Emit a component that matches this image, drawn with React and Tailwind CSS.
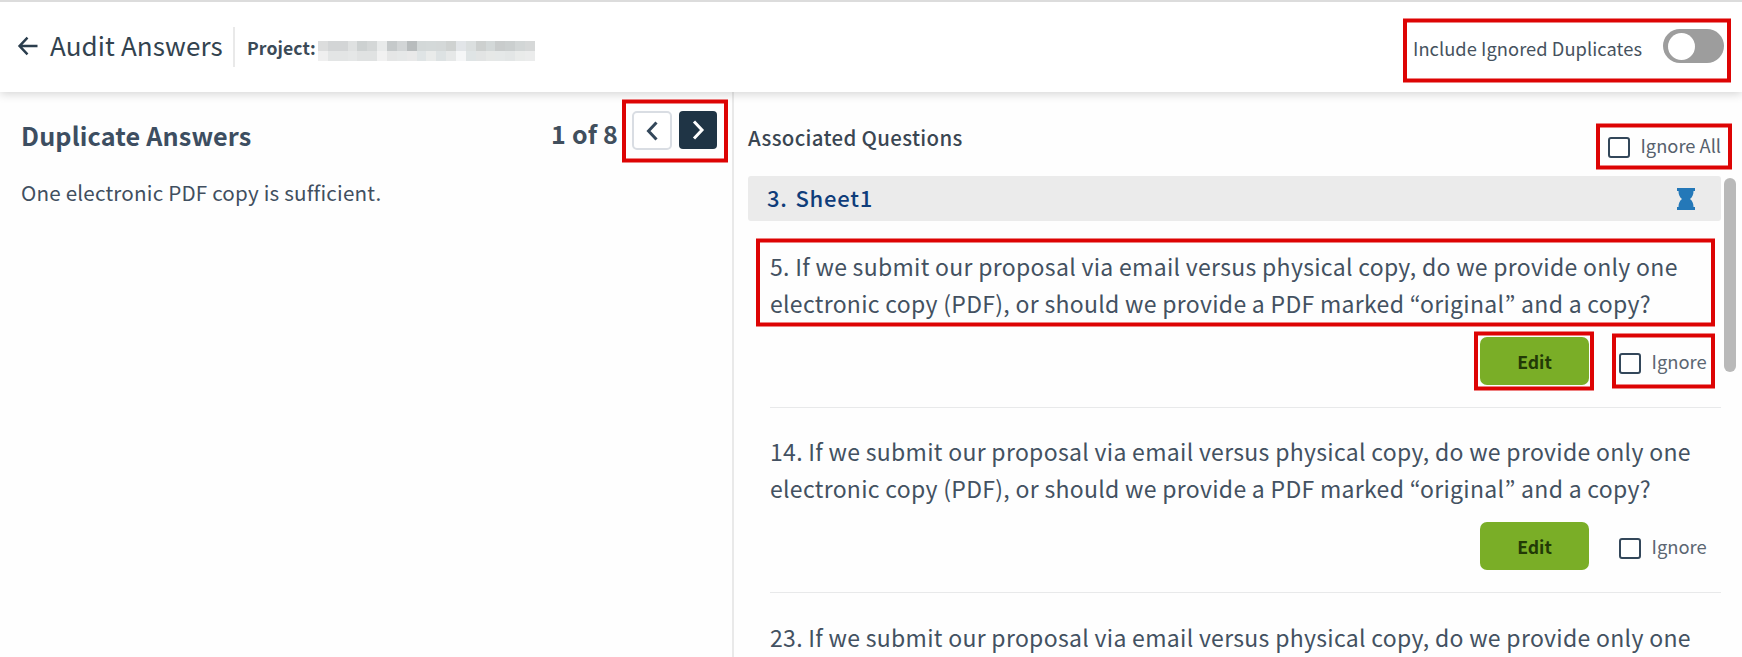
const QUESTION =
  'If we submit our proposal via email versus physical copy, do we provide only one electronic copy (PDF), or should we provide a PDF marked “original” and a copy?';

const questions = [
  { id: 5, text: QUESTION },
  { id: 14, text: QUESTION },
  { id: 23, text: QUESTION }
];

// Pixelated project name, two rows of tiles
const redacted = [
  ['#dcdddd', '#d3d5d6', '#d3d5d6', '#dfe1e1', '#cdd1d1', '#d4d7d7', '#e8eaea', '#c5c9ca', '#d2d5d6', '#b8bcbd', '#d3d8d8', '#d4d9d9', '#d4d8d8', '#cfd2d1', '#e2e5e8', '#dbdfdf', '#cdd0cf', '#d3d8d8', '#c9cccc', '#cbcfcf', '#d2d6d6', '#d6d8d8'],
  ['#efefef', '#e3e5e5', '#e3e5e5', '#e5e7e7', '#e0e2e2', '#e0e2e2', '#f1f1f1', '#e5e6e6', '#e6e8e8', '#e9e9e9', '#dfe4e5', '#e9ebea', '#dde2e3', '#e6e8e8', '#f5f6f7', '#dfe4e5', '#e2e4e4', '#e6e8e7', '#e5e8e8', '#e3e6e6', '#e9ebea', '#ebecec']
];

const highlights = [
  'left-[1403px] top-[19px] w-[328px] h-[63px]',
  'left-[622px] top-[100px] w-[106px] h-[62px]',
  'left-[1596px] top-[124px] w-[136px] h-[45px]',
  'left-[756px] top-[239px] w-[959px] h-[87px]',
  'left-[1474px] top-[332px] w-[120px] h-[58px]',
  'left-[1612px] top-[334px] w-[103px] h-[54px]'
];

const Redacted = () => (
  <div className="flex flex-col">
    {redacted.map((row, i) => (
      <div key={i} className="flex h-[10px] w-[217px]">
        {row.map((color, j) => (
          <span key={j} className="flex-1" style={{ backgroundColor: color }} />
        ))}
      </div>
    ))}
  </div>
);

const Checkbox = () => (
  <span className="h-[21px] w-[22px] shrink-0 rounded-[3px] border-[2.5px] border-[#33475a] bg-white" />
);

const Header = () => (
  <header className="relative z-10 flex h-[92px] shrink-0 items-center border-t-2 border-[#dcdcdc] bg-white pr-[18px] pb-1 pl-[17px] shadow-[0_2px_9px_rgba(0,0,0,0.17)]">
    <svg className="mt-[2px] w-[22px]" height="20" viewBox="0 0 22 20" fill="none" stroke="#2b3e4e" strokeWidth="2.5">
      <path d="M20.500 10H3M10.500 1.700L2.600 10l7.900 8.300" />
    </svg>
    <h1 className="ml-[11px] w-[183px] pb-[2px] text-[26px] tracking-[0.1px] whitespace-nowrap text-[#33434f]">Audit Answers</h1>
    <div className="mt-1 h-[40px] w-[2px] bg-[#e9e9e9]" />
    <span className="ml-[12px] w-[71px] pt-1.5 text-[17.6px] font-bold tracking-[0.1px] text-[#3b4a57]">Project:</span>
    <div className="pt-[11px]">
      <Redacted />
    </div>
    <span className="ml-auto pt-2 text-[18.3px] tracking-[0.05px] text-[#46525e]">Include Ignored Duplicates</span>
    <div className="mt-[2px] ml-[21px] flex h-[34px] w-[61px] items-center rounded-full bg-[#9d9d9d] pl-[5px]">
      <span className="size-[27px] rounded-full bg-white" />
    </div>
  </header>
);

const AnswerPanel = () => (
  <section className="w-[734px] shrink-0 border-r-2 border-[#e9e9e9] pt-[19px] pr-[15px] pl-[21px]">
    <div className="flex h-[48px] items-start">
      <h2 className="text-[25.2px] leading-[48px] font-bold tracking-[0.15px] text-[#3d4e61]">Duplicate Answers</h2>
      <span className="ml-auto text-[25px] leading-[44px] font-bold tracking-[0.2px] text-[#414f5d]">1 of 8</span>
      <button className="ml-[14px] flex h-[39px] w-[40px] items-center justify-center rounded-[5px] border-2 border-[#d9dde3] bg-white">
        <svg width="14" height="20" viewBox="0 0 14 20" fill="none" stroke="#33475a" strokeWidth="3">
          <path d="M11.500 1.500L3.500 10l8 8.500" />
        </svg>
      </button>
      <button className="ml-[7px] flex h-[38px] w-[38px] items-center justify-center rounded-[4px] bg-[#1f3445]">
        <svg width="14" height="20" viewBox="0 0 14 20" fill="none" stroke="#fff" strokeWidth="3">
          <path d="M3 1.500l8 8.500-8 8.500" />
        </svg>
      </button>
    </div>
    <p className="mt-[19px] text-[20.6px] leading-[28px] tracking-[0.2px] text-[#414f5f]">
      One electronic PDF copy is sufficient.
    </p>
  </section>
);

const Question = ({ id, text }) => (
  <li className="ml-[22px] h-[185.5px] shrink-0 border-t border-[#e8e9ea] pt-[25.7px] first:border-transparent">
    <p className="w-[945px] text-[23px] leading-[37px] tracking-[0.3px] text-[#435161]">{`${id}. ${text}`}</p>
    <div className="mt-[15.1px] flex h-[48px] items-center justify-end">
      <button className="h-full w-[109px] rounded-[7px] bg-[#7aae27] pt-[2px] text-[17.6px] font-bold text-[#223a06]">
        Edit
      </button>
      <label className="ml-[30px] flex w-[102px] items-center">
        <span className="flex pt-[5px]">
          <Checkbox />
        </span>
        <span className="ml-[10.5px] pt-[1.5px] text-[18.4px] text-[#5b6672]">Ignore</span>
      </label>
    </div>
  </li>
);

const QuestionsPanel = () => (
  <section className="flex min-w-0 flex-1 flex-col pl-[14px]">
    <div className="flex h-[84px] shrink-0 items-start justify-between pt-[24px]">
      <h3 className="pt-px text-[20.4px] leading-[40px] font-medium tracking-[0.35px] text-[#3a4652]">Associated Questions</h3>
      <label className="flex w-[134px] items-center pt-[15px]">
        <span className="flex pt-[5px]">
          <Checkbox />
        </span>
        <span className="ml-[10.5px] text-[18.3px] leading-[28px] whitespace-nowrap text-[#56616d]">Ignore All</span>
      </label>
    </div>
    <div className="flex min-h-0 flex-1">
      <div className="flex w-[973px] flex-col">
        <div className="flex h-[45px] shrink-0 items-center rounded-[3px] bg-[#ebebeb] pr-[26px] pl-[19px]">
          <span className="pb-[2px] text-[22px] font-medium tracking-[0.8px] text-[#0f3d7a] [word-spacing:2px]">3. Sheet1</span>
          <svg className="ml-auto" width="18" height="22" viewBox="0 0 18 22" fill="#2478b8">
            <path d="M0 0h18v3h-1.500c0 3.500-1 6-3.500 8 2.500 2 3.500 4.500 3.500 8H18v3H0v-3h1.500c0-3.500 1-6 3.500-8-2.500-2-3.500-4.500-3.500-8H0z" />
          </svg>
        </div>
        <ul className="flex flex-col">
          {questions.map((question) => (
            <Question key={question.id} {...question} />
          ))}
        </ul>
      </div>
      <div className="mt-[2px] ml-[3px] h-[194px] w-[12px] rounded-full bg-[#b9b9b9]" />
    </div>
  </section>
);

export default function App() {
  return (
    <div className="relative flex h-screen w-[1742px] flex-col overflow-hidden bg-[#fefefe] font-['Noto_Sans_CJK_KR','Noto_Sans',sans-serif]">
      <Header />
      <main className="flex min-h-0 flex-1">
        <AnswerPanel />
        <QuestionsPanel />
      </main>
      {highlights.map((place) => (
        <div
          key={place}
          className={`pointer-events-none absolute z-20 border-x-4 border-y-3 border-[#dd0404] shadow-[0_-1px_0_#dd040480,0_1px_0_#dd040480,inset_0_1px_0_#dd040480,inset_0_-1px_0_#dd040480] ${place}`}
        />
      ))}
    </div>
  );
}
